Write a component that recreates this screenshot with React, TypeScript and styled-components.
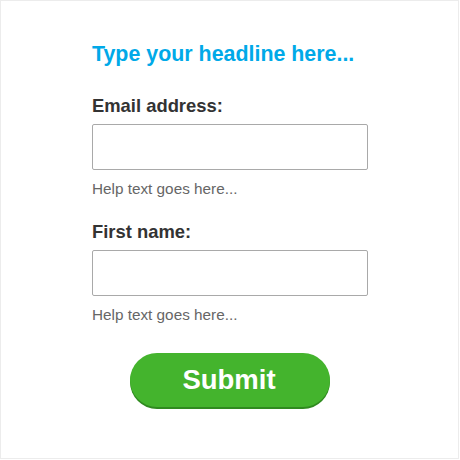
import React from "react";
import styled, { createGlobalStyle } from "styled-components";

const Global = createGlobalStyle`
  html, body { margin: 0; padding: 0; background: #fff; }
  body { font-family: "Liberation Sans", Arial, sans-serif; }
`;

const Frame = styled.div`
  box-sizing: border-box;
  width: 459px;
  height: 459px;
  border: 1px solid #ececec;
  padding: 38px 91px 0 91px;
  display: flex;
  flex-direction: column;
`;

const Headline = styled.h1`
  margin: 0 0 25px 0;
  font-size: 21.4px;
  line-height: 30px;
  font-weight: 700;
  color: #00a9e8;
`;

const Field = styled.div`
  display: flex;
  flex-direction: column;
  margin-bottom: 22px;
`;

const Label = styled.label`
  font-size: 18.4px;
  line-height: 24px;
  font-weight: 700;
  color: #333;
  margin-bottom: 6px;
`;

const Input = styled.input`
  box-sizing: border-box;
  width: 276px;
  height: 46px;
  border: 1px solid #a9a9a9;
  border-radius: 2px;
  background: #fff;
  margin: 0;
  padding: 0 10px;
  font-family: inherit;
  font-size: 15px;
  outline: none;
`;

const Help = styled.div`
  margin-top: 10px;
  font-size: 15.3px;
  line-height: 18px;
  color: #666;
`;

const ButtonRow = styled.div`
  display: flex;
  justify-content: center;
  width: 276px;
  margin-top: 7px;
`;

const SubmitButton = styled.button`
  width: 200px;
  height: 54px;
  border: none;
  border-radius: 28px;
  background: #44b42d;
  box-shadow: 0 2px 0 #2f8a1f;
  color: #fff;
  font-family: inherit;
  font-weight: 700;
  font-size: 27.5px;
  padding: 0 2px 0 0;
  cursor: pointer;
`;

export default function App() {
  return (
    <>
      <Global />
      <Frame>
        <Headline>Type your headline here...</Headline>
        <Field>
          <Label>Email address:</Label>
          <Input type="text" />
          <Help>Help text goes here...</Help>
        </Field>
        <Field>
          <Label>First name:</Label>
          <Input type="text" />
          <Help>Help text goes here...</Help>
        </Field>
        <ButtonRow>
          <SubmitButton>Submit</SubmitButton>
        </ButtonRow>
      </Frame>
    </>
  );
}
